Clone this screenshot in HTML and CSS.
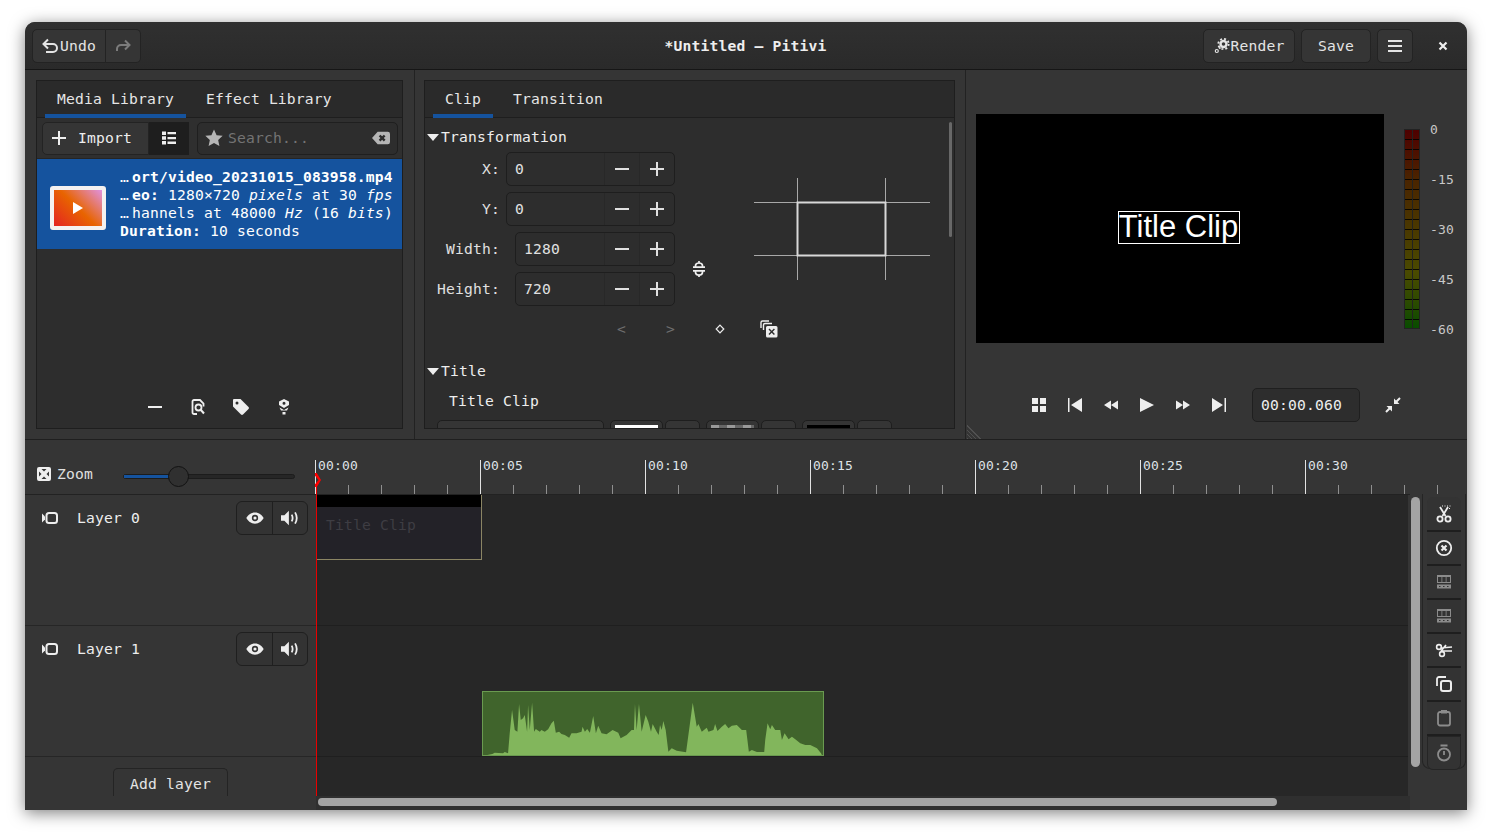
FILE: index.html
```html
<!DOCTYPE html>
<html lang="en">
<head>
  <meta charset="UTF-8">
  <title>Pitivi</title>
  <link rel="stylesheet" href="styles.css">
</head>
<body>
  <svg class="defs" width="0" height="0">
    <symbol id="i-plus" viewBox="0 0 16 16"><path d="M1 8h14M8 1v14" stroke="currentColor" stroke-width="2" fill="none"/></symbol>
    <symbol id="i-minus" viewBox="0 0 16 16"><path d="M1 8h14" stroke="currentColor" stroke-width="2" fill="none"/></symbol>
    <symbol id="i-eye" viewBox="0 0 16 16"><path fill="currentColor" fill-rule="evenodd" d="M8 3c3.600 0 6.400 2.400 7.700 5-1.300 2.600-4.100 5-7.700 5S1.600 10.600.3 8C1.600 5.400 4.400 3 8 3zm0 2.200a2.800 2.800 0 1 0 0 5.600 2.800 2.800 0 0 0 0-5.600zM8 6.600a1.400 1.400 0 1 1 0 2.800 1.400 1.400 0 0 1 0-2.800z"/></symbol>
    <symbol id="i-speaker" viewBox="0 0 16 16"><path fill="currentColor" d="M0 5.500h3L7 1.500v13l-4-4H0z"/><path d="M9.500 5c1 1.800 1 4.200 0 6M12.500 3c1.800 3 1.800 7 0 10" stroke="currentColor" stroke-width="1.600" fill="none"/></symbol>
    <symbol id="i-camera" viewBox="0 0 16 16"><path fill="currentColor" d="M0 3.500l3 3v3l-3 3z"/><rect x="4.500" y="3" width="10.500" height="10" rx="2.500" fill="none" stroke="currentColor" stroke-width="2"/></symbol>
  </svg>

  <div class="window">
    <header class="headerbar">
      <div class="hb-left">
        <div class="btn-group">
          <button class="btn btn-undo">
            <svg class="ic16" viewBox="0 0 16 16"><path d="M6 1.500L1.500 6 6 10.500M2 6h9a4 4 0 0 1 0 8H4" fill="none" stroke="currentColor" stroke-width="2"/></svg>Undo
          </button>
          <button class="btn btn-redo">
            <svg class="ic16" viewBox="0 0 16 16"><path d="M10 2.500L14.500 7 10 11.500M14 7H6a4 4 0 0 0-4 4v2" fill="none" stroke="currentColor" stroke-width="2"/></svg>
          </button>
        </div>
      </div>
      <div class="hb-title">*Untitled — Pitivi</div>
      <div class="hb-right">
        <button class="btn btn-render">
          <svg class="ic16" viewBox="0 0 16 16"><g fill="none" stroke="currentColor"><circle cx="9.500" cy="6" r="3" stroke-width="2.400"/><circle cx="9.500" cy="6" r="5.200" stroke-width="1.800" stroke-dasharray="2 2.080"/><circle cx="2.800" cy="13" r="1.500" stroke-width="1.200"/></g><circle cx="5.800" cy="10" r="1" fill="currentColor"/></svg>Render
        </button>
        <button class="btn btn-save">Save</button>
        <button class="btn btn-menu">
          <svg class="ic16" viewBox="0 0 16 16"><path d="M1 3h14M1 8h14M1 13h14" stroke="currentColor" stroke-width="2"/></svg>
        </button>
        <button class="btn-close">
          <svg class="ic10" viewBox="0 0 10 10"><path d="M1.500 1.500l7 7M8.500 1.500l-7 7" stroke="currentColor" stroke-width="2.200"/></svg>
        </button>
      </div>
    </header>

    <section class="top">
      <div class="pane pane-left">
        <div class="frame">
          <div class="tabs">
            <div class="tab active">Media Library</div>
            <div class="tab">Effect Library</div>
          </div>
          <div class="media-tools">
            <div class="import-group">
              <button class="import-btn">
                <svg class="ic16" viewBox="0 0 16 16"><use href="#i-plus"/></svg>Import
              </button>
              <button class="list-toggle">
                <svg class="ic16" viewBox="0 0 16 16"><path fill="currentColor" d="M1 1.500h4v3.500H1zM1 6.300h4v3.500H1zM1 11h4v3.500H1zM6.500 2h8.500v2.300H6.500zM6.500 7h8.500v2.300H6.500zM6.500 11.600h8.500v2.300H6.500z"/></svg>
              </button>
            </div>
            <div class="search">
              <svg class="ic18 dim" viewBox="0 0 16 16"><path fill="currentColor" d="M8 .5l2.300 5 5.400.6-4 3.700 1.100 5.400L8 12.500l-4.800 2.700 1.100-5.400-4-3.700 5.400-.6z"/></svg>
              <span class="search-text">Search...</span>
              <svg class="ic18 dim" viewBox="0 0 16 16"><path fill-rule="evenodd" fill="currentColor" d="M5 2.500h9a2 2 0 0 1 2 2v7a2 2 0 0 1-2 2H5L0 8zM7.500 5L6 6.500 7.500 8 6 9.500 7.500 11 9 9.500l1.500 1.500 1.500-1.500L10.500 8 12 6.500 10.500 5 9 6.500z"/></svg>
            </div>
          </div>
          <div class="media-row">
            <div class="thumb"><span class="thumb-play"></span></div>
            <div class="media-info">
              <div><span class="ell">…</span><b>ort/video_20231015_083958.mp4</b></div>
              <div><span class="ell">…</span><b>eo:</b> 1280×720 <i>pixels</i> at 30 <i>fps</i></div>
              <div><span class="ell">…</span>hannels at 48000 <i>Hz</i> (16 <i>bits</i>)</div>
              <div><b>Duration:</b> 10 seconds</div>
            </div>
          </div>
          <div class="media-actions">
            <svg class="ic16" viewBox="0 0 16 16"><use href="#i-minus"/></svg>
            <svg class="ic16" viewBox="0 0 16 16"><path fill="none" stroke="currentColor" stroke-width="1.800" d="M7 15H4a1.500 1.500 0 0 1-1.500-1.500v-11A1.500 1.500 0 0 1 4 1h6l3.500 3.500v3"/><circle cx="8.500" cy="8.500" r="3" fill="none" stroke="currentColor" stroke-width="1.800"/><path d="M10.500 10.500l3.500 4" stroke="currentColor" stroke-width="2"/></svg>
            <svg class="ic16" viewBox="0 0 16 16"><path fill="currentColor" fill-rule="evenodd" d="M1 0h6.500L15.500 8a1.500 1.500 0 0 1 0 2L10 15.500a1.500 1.500 0 0 1-2 0L0 7.500V1a1 1 0 0 1 1-1zM4 2.500a1.500 1.500 0 1 0 0 3 1.500 1.500 0 0 0 0-3z"/></svg>
            <svg class="ic16" viewBox="0 0 16 16"><path fill="currentColor" fill-rule="evenodd" d="M8 0l5 2.500v3.500L8 9 3 6V2.500zM8 2.800a1.500 1.500 0 1 0 0 3 1.500 1.500 0 0 0 0-3zM3.500 8.500L8 11l4.500-2.500-1.500 3H5zM6.500 13h3v2.500h-3z"/></svg>
          </div>
        </div>
      </div>

      <div class="pane pane-mid">
        <div class="frame">
          <div class="tabs">
            <div class="tab active">Clip</div>
            <div class="tab">Transition</div>
          </div>
          <div class="clip-body">
            <div class="scroll-mark"></div>
            <div class="expander"><span class="arrow"></span>Transformation</div>
            <div class="transform">
              <div class="spins">
                <div class="spin-row">
                  <label>X:</label>
                  <div class="spin"><span class="spin-val">0</span><button><svg class="ic16" viewBox="0 0 16 16"><use href="#i-minus"/></svg></button><button><svg class="ic16" viewBox="0 0 16 16"><use href="#i-plus"/></svg></button></div>
                </div>
                <div class="spin-row">
                  <label>Y:</label>
                  <div class="spin"><span class="spin-val">0</span><button><svg class="ic16" viewBox="0 0 16 16"><use href="#i-minus"/></svg></button><button><svg class="ic16" viewBox="0 0 16 16"><use href="#i-plus"/></svg></button></div>
                </div>
                <div class="spin-row narrow">
                  <label>Width:</label>
                  <div class="spin"><span class="spin-val">1280</span><button><svg class="ic16" viewBox="0 0 16 16"><use href="#i-minus"/></svg></button><button><svg class="ic16" viewBox="0 0 16 16"><use href="#i-plus"/></svg></button></div>
                </div>
                <div class="spin-row narrow">
                  <label>Height:</label>
                  <div class="spin"><span class="spin-val">720</span><button><svg class="ic16" viewBox="0 0 16 16"><use href="#i-minus"/></svg></button><button><svg class="ic16" viewBox="0 0 16 16"><use href="#i-plus"/></svg></button></div>
                </div>
              </div>
              <svg class="link-ic" viewBox="0 0 12 16"><path d="M0 6.200h12M2.500 6V4.800a3.500 2.800 0 0 1 7 0V6M6 0v2M0 9.800h12M2.500 10v1.200a3.500 2.800 0 0 0 7 0V10M6 14v2" fill="none" stroke="currentColor" stroke-width="1.700"/></svg>
              <svg class="crop-diagram" viewBox="0 0 176 102">
                <path d="M0 24.500h176M0 77.500h176M43.500 0v102M131.500 0v102" stroke="#a8a8a8" fill="none"/>
                <rect x="43.500" y="24.500" width="88" height="53" fill="none" stroke="#d8d8d8" stroke-width="2"/>
              </svg>
            </div>
            <div class="key-row">
              <span class="key-btn dimmer">&lt;</span>
              <span class="key-btn dimmer">&gt;</span>
              <span class="key-btn"><svg class="ic10" viewBox="0 0 10 10"><path d="M5 1.200L8.800 5 5 8.800 1.200 5z" fill="none" stroke="currentColor" stroke-width="1.200"/></svg></span>
              <span class="key-btn"><svg class="ic18" viewBox="0 0 18 18"><path d="M1 8V2.500A1.500 1.500 0 0 1 2.500 1H9M3.500 10V5A1.500 1.500 0 0 1 5 3.500h7" fill="none" stroke="currentColor" stroke-width="1.400"/><path fill="currentColor" fill-rule="evenodd" d="M7.500 6h8.500A1.500 1.500 0 0 1 17.500 7.500v8.500a1.500 1.500 0 0 1-1.500 1.500H7.500A1.500 1.500 0 0 1 6 16V7.500A1.500 1.500 0 0 1 7.500 6zM9.500 8.500L8.500 9.500l2.200 2.200-2.200 2.200 1 1 2.200-2.200 2.200 2.200 1-1-2.200-2.200 2.200-2.200-1-1-2.200 2.200z"/></svg></span>
            </div>
            <div class="expander title-exp"><span class="arrow"></span>Title</div>
            <div class="title-line">Title Clip</div>
            <div class="title-controls">
              <div class="font-box"></div>
              <div class="color-pair"><div class="color-btn"><span class="swatch white"></span></div><div class="color-arrow"></div></div>
              <div class="color-pair"><div class="color-btn"><span class="swatch check"></span></div><div class="color-arrow"></div></div>
              <div class="color-pair"><div class="color-btn"><span class="swatch black"></span></div><div class="color-arrow"></div></div>
            </div>
          </div>
        </div>
      </div>

      <div class="pane pane-right">
        <div class="viewer-row">
          <div class="viewer"><div class="viewer-title">Title Clip</div></div>
          <div class="vu"></div>
          <div class="vu-labels"><span>0</span><span>-15</span><span>-30</span><span>-45</span><span>-60</span></div>
        </div>
        <div class="transport">
          <button><svg class="ic14" viewBox="0 0 14 14"><path fill="currentColor" d="M0 0h6v6H0zM8 0h6v6H8zM0 8h6v6H0zM8 8h6v6H8z"/></svg></button>
          <button><svg class="ic14" viewBox="0 0 14 14"><path fill="currentColor" d="M0 0h1.500v14H0zM14 0v14L3 7z"/></svg></button>
          <button><svg class="ic14" viewBox="0 0 14 14"><path fill="currentColor" d="M7 2.500v9L0 7zM14 2.500v9L7 7z"/></svg></button>
          <button><svg class="ic14" viewBox="0 0 14 14"><path fill="currentColor" d="M0 0l14 7-14 7z"/></svg></button>
          <button><svg class="ic14" viewBox="0 0 14 14"><path fill="currentColor" d="M0 2.500L7 7l-7 4.500zM7 2.500L14 7l-7 4.500z"/></svg></button>
          <button><svg class="ic14" viewBox="0 0 14 14"><path fill="currentColor" d="M0 0l11 7-11 7zM12.500 0H14v14h-1.500z"/></svg></button>
          <div class="timecode">00:00.060</div>
          <button><svg class="ic16" viewBox="0 0 16 16"><path fill="currentColor" d="M9 1.500V7h5.500zM7 14.500V9H1.500z"/><path d="M10.500 5.500l4.500-4.500M5.500 10.500L1 15" stroke="currentColor" stroke-width="2"/></svg></button>
        </div>
        <div class="grip"></div>
      </div>
    </section>

    <section class="timeline">
      <div class="tl-main">
        <div class="tl-top">
          <div class="zoom-box">
            <svg class="ic14" viewBox="0 0 14 14"><path fill="currentColor" fill-rule="evenodd" d="M2 0h10a2 2 0 0 1 2 2v10a2 2 0 0 1-2 2H2a2 2 0 0 1-2-2V2a2 2 0 0 1 2-2zM4.500 2L7 4.500 9.500 2zM4.500 12L7 9.500 9.500 12zM2 4.500L4.500 7 2 9.500zM12 4.500L9.500 7 12 9.500z"/></svg>
            <span class="zoom-label">Zoom</span>
            <div class="slider"><span class="slider-fill"></span><span class="slider-knob"></span></div>
          </div>
          <div class="ruler">
            <span>00:00</span><span>00:05</span><span>00:10</span><span>00:15</span><span>00:20</span><span>00:25</span><span>00:30</span>
          </div>
        </div>
        <div class="tl-body">
          <div class="heads">
            <div class="layer-head">
              <svg class="ic16" viewBox="0 0 16 16"><use href="#i-camera"/></svg>
              <span class="layer-name">Layer 0</span>
              <div class="layer-btns">
                <button><svg class="ic18" viewBox="0 0 16 16"><use href="#i-eye"/></svg></button>
                <button><svg class="ic18" viewBox="0 0 16 16"><use href="#i-speaker"/></svg></button>
              </div>
            </div>
            <div class="layer-head">
              <svg class="ic16" viewBox="0 0 16 16"><use href="#i-camera"/></svg>
              <span class="layer-name">Layer 1</span>
              <div class="layer-btns">
                <button><svg class="ic18" viewBox="0 0 16 16"><use href="#i-eye"/></svg></button>
                <button><svg class="ic18" viewBox="0 0 16 16"><use href="#i-speaker"/></svg></button>
              </div>
            </div>
            <div class="add-wrap"><button class="add-layer">Add layer</button></div>
          </div>
          <div class="tracks">
            <div class="track">
              <div class="clip-title"><div class="clip-title-bar"></div><div class="clip-title-text">Title Clip</div></div>
            </div>
            <div class="track">
              <svg class="clip-audio" viewBox="37 33 1024 195" preserveAspectRatio="none">
                <rect x="37" y="33" width="1024" height="195" fill="#40642c"/>
                <polygon fill="#82b65c" points="38,228 68,222 75,218 100,220 105,216 115,220 120,160 127,90 135,150 143,155 148,72 153,120 160,115 165,105 172,155 175,75 180,150 187,68 193,155 198,147 210,155 215,150 225,155 235,148 245,130 252,122 258,158 268,155 275,162 285,165 298,173 305,160 320,160 335,155 338,140 345,155 352,147 360,158 370,108 378,160 385,137 395,160 410,163 428,150 445,158 452,175 470,165 485,150 492,150 495,72 500,150 507,72 515,155 527,105 535,125 543,155 548,132 560,155 566,165 570,135 575,150 580,123 587,150 595,215 605,205 620,212 648,217 668,68 680,140 685,132 695,155 710,143 715,155 730,150 735,132 742,153 755,140 765,132 775,145 785,137 800,135 815,150 828,150 836,215 845,210 860,216 882,216 885,180 892,130 900,148 905,135 915,150 930,150 935,180 943,160 955,178 965,170 975,178 990,190 1005,195 1020,195 1040,205 1052,220 1056,228"/>
                <rect x="38.500" y="34.500" width="1021" height="192" fill="none" stroke="#6a9a50" stroke-width="3"/>
              </svg>
            </div>
            <div class="track-rest"></div>
          </div>
        </div>
        <div class="hscroll"><div class="hscroll-thumb"></div></div>
        <div class="playhead"><span class="playhead-mark"></span></div>
      </div>
      <div class="tl-side">
        <div class="vscroll"></div>
        <div class="tool-frame">
          <button class="tool"><svg class="ic18" viewBox="0 0 18 18"><path d="M7 1h1M9.500 1h1M12 1h1M14.500 1h1M14.500 3v1" stroke="currentColor"/><path d="M5 2l5.500 9M13 2L7.500 11" stroke="currentColor" stroke-width="1.800" fill="none"/><circle cx="5" cy="14" r="2.600" fill="none" stroke="currentColor" stroke-width="1.800"/><circle cx="13" cy="14" r="2.600" fill="none" stroke="currentColor" stroke-width="1.800"/></svg></button>
          <button class="tool"><svg class="ic18" viewBox="0 0 18 18"><circle cx="9" cy="9" r="7.200" fill="none" stroke="currentColor" stroke-width="1.800"/><path d="M6.500 6.500l5 5M11.500 6.500l-5 5" stroke="currentColor" stroke-width="2.200"/></svg></button>
          <button class="tool faded"><svg class="ic16" viewBox="0 0 16 16"><path fill="currentColor" fill-rule="evenodd" d="M1 1h14v8H1zM2 3v5h3.500V3zM6.300 3v5h3.400V3zM10.500 3v5H14V3zM1 10.500h14v4H1zM3 12v1h1.500v-1zM7 12v1h1.500v-1zM11 12v1h1.500v-1z"/></svg></button>
          <button class="tool faded"><svg class="ic16" viewBox="0 0 16 16"><path fill="currentColor" fill-rule="evenodd" d="M1 1h14v8H1zM2 3v5h3.500V3zM6.300 3v5h3.400V3zM10.500 3v5H14V3zM1 10.500h14v4H1zM3 12v1h1.500v-1zM7 12v1h1.500v-1zM11 12v1h1.500v-1z"/></svg></button>
          <button class="tool"><svg class="ic18" viewBox="0 0 18 18"><path d="M5.500 7L17 6M6 10l5-6M6.500 10L17 10" stroke="currentColor" stroke-width="1.700" fill="none"/><circle cx="4" cy="6" r="2.400" fill="none" stroke="currentColor" stroke-width="1.600"/><circle cx="7" cy="13" r="2.400" fill="none" stroke="currentColor" stroke-width="1.600"/></svg></button>
          <button class="tool"><svg class="ic18" viewBox="0 0 18 18"><path d="M2 11V4a2 2 0 0 1 2-2h7" fill="none" stroke="currentColor" stroke-width="1.800"/><rect x="6" y="6" width="10" height="10" rx="2" fill="none" stroke="currentColor" stroke-width="2"/></svg></button>
          <button class="tool faded"><svg class="ic18" viewBox="0 0 18 18"><rect x="3" y="3" width="12" height="13.500" rx="2" fill="none" stroke="currentColor" stroke-width="1.800"/><path fill="currentColor" d="M6 1h6v3.500H6z"/></svg></button>
          <button class="tool faded"><svg class="ic18" viewBox="0 0 18 18"><circle cx="9" cy="10.500" r="6" fill="none" stroke="currentColor" stroke-width="1.800"/><path d="M5.500 1.500h7M9 7v4" stroke="currentColor" stroke-width="1.800"/></svg></button>
        </div>
      </div>
    </section>
  </div>
</body>
</html>
```

FILE: styles.css
```css
* {
  box-sizing: border-box;
}
html, body {
  margin: 0;
  height: 100%;
  background: #fff;
  overflow: hidden;
}
body {
  padding: 22px 25px 0;
  font: 14.67px/20px "DejaVu Sans Mono", monospace;
  letter-spacing: .17px;
  color: #eee;
}
button {
  font: inherit;
  letter-spacing: inherit;
  color: inherit;
  background: none;
  border: 0;
  padding: 0;
}
svg {
  display: block;
  flex: none;
}
.defs {
  position: absolute;
}
.ic10 { width: 10px; height: 10px; }
.ic14 { width: 14px; height: 14px; }
.ic16 { width: 16px; height: 16px; }
.ic18 { width: 18px; height: 18px; }
.dim { color: #b5b5b5; }

.window {
  width: 1442px;
  height: 788px;
  display: flex;
  flex-direction: column;
  background: #353535;
  border-radius: 10px 10px 0 0;
  box-shadow: 0 3px 16px rgba(0,0,0,.5);
  overflow: hidden;
}

/* header */
.headerbar {
  height: 48px;
  flex: none;
  display: grid;
  grid-template-columns: 1fr auto 1fr;
  align-items: center;
  padding: 0 8px 0 7px;
  background: linear-gradient(#303030, #2a2a2a);
  border-bottom: 1px solid #161616;
}
.hb-title {
  font-weight: bold;
  color: #eee;
}
.hb-right {
  display: flex;
  justify-content: flex-end;
  align-items: center;
  gap: 6px;
}
.btn-group {
  display: inline-flex;
}
.btn {
  height: 34px;
  display: flex;
  align-items: center;
  justify-content: center;
  background: #353535;
  border: 1px solid #232323;
  border-radius: 5px;
  color: #e4e4e4;
}
.btn-undo {
  width: 74px;
  gap: 2px;
  border-radius: 5px 0 0 5px;
}
.btn-redo {
  width: 35px;
  border-left: 0;
  border-radius: 0 5px 5px 0;
  color: #7c7c7c;
}
.btn-render { width: 92px; gap: 1px; }
.btn-save { width: 70px; }
.btn-menu { width: 36px; }
.btn-close {
  width: 30px;
  margin-left: 9px;
  margin-right: 1px;
  display: flex;
  justify-content: center;
}

/* top panes */
.top {
  height: 370px;
  flex: none;
  display: flex;
  border-bottom: 1px solid #1f1f1f;
}
.pane {
  position: relative;
  display: flex;
  flex-direction: column;
  border-right: 1px solid #222;
}
.pane-left {
  width: 390px;
  padding: 10px 11px 10px 11px;
}
.pane-mid {
  width: 551px;
  padding: 10px 10px 10px 9px;
}
.pane-right {
  flex: 1;
  border-right: 0;
}
.frame {
  flex: 1;
  min-height: 0;
  display: flex;
  flex-direction: column;
  border: 1px solid #1e1e1e;
  background: #2d2d2d;
  overflow: hidden;
}
.tabs {
  height: 37px;
  flex: none;
  display: flex;
  gap: 8px;
  padding-left: 8px;
  background: #2a2a2a;
  border-bottom: 1px solid #1e1e1e;
}
.tab {
  padding: 8px 12px 0;
  color: #e6e6e6;
  height: 37px;
}
.tab.active {
  border-bottom: 4px solid #15539e;
}

/* media library */
.media-tools {
  height: 41px;
  flex: none;
  display: flex;
  align-items: center;
  gap: 8px;
  padding: 0 0 0 5px;
  background: #2f2f2f;
  border-bottom: 1px solid #252525;
}
.import-group {
  display: flex;
  height: 33px;
}
.import-btn {
  width: 107px;
  display: flex;
  align-items: center;
  gap: 11px;
  padding-left: 8px;
  background: #353535;
  border: 1px solid #232323;
  border-radius: 5px 0 0 5px;
}
.list-toggle {
  width: 40px;
  display: flex;
  align-items: center;
  justify-content: center;
  background: #1e1e1e;
}
.search {
  width: 201px;
  height: 33px;
  display: flex;
  align-items: center;
  padding: 0 7px;
  gap: 5px;
  background: #2d2d2d;
  border: 1px solid #1f1f1f;
  border-radius: 5px;
}
.search-text {
  flex: 1;
  color: #747474;
}
.media-row {
  height: 90px;
  flex: none;
  display: flex;
  align-items: center;
  gap: 14px;
  padding-left: 13px;
  background: #15539e;
  color: #fff;
  line-height: 18px;
}
.thumb {
  width: 56px;
  height: 44px;
  margin-top: 8px;
  display: flex;
  align-items: center;
  justify-content: center;
  border: 4px solid #f4f1f0;
  border-radius: 3px;
  background: linear-gradient(45deg, #e42322 0%, #e86400 50%, #e092e0 100%);
}
.thumb-play {
  width: 0;
  height: 0;
  border-left: 10px solid #fff;
  border-top: 6px solid transparent;
  border-bottom: 6px solid transparent;
}
.media-info {
  white-space: nowrap;
}
.ell {
  display: inline-block;
  width: 12px;
}
.media-actions {
  margin-top: auto;
  height: 42px;
  display: flex;
  align-items: center;
  justify-content: center;
  gap: 27px;
  color: #eee;
}

/* clip panel */
.clip-body {
  position: relative;
  flex: 1;
  min-height: 0;
  padding: 9px 0 0 3px;
  overflow: hidden;
}
.scroll-mark {
  position: absolute;
  top: 4px;
  right: 2px;
  width: 3px;
  height: 115px;
  border-radius: 2px;
  background: #686868;
}
.expander {
  display: flex;
  align-items: center;
  gap: 3px;
}
.arrow {
  width: 0;
  height: 0;
  border-left: 6px solid transparent;
  border-right: 6px solid transparent;
  border-top: 7px solid #eee;
  margin-left: -1px;
  margin-right: -1px;
}
.transform {
  display: flex;
  margin-top: 5px;
  margin-left: -3px;
}
.spins {
  width: 250px;
  display: flex;
  flex-direction: column;
  gap: 6px;
}
.spin-row {
  display: flex;
  align-items: center;
  justify-content: flex-end;
  gap: 6px;
  color: #e0e0e0;
}
.spin {
  width: 169px;
  height: 34px;
  display: flex;
  border: 1px solid #1e1e1e;
  border-radius: 5px;
  background: #2d2d2d;
}
.spin-row.narrow .spin {
  width: 160px;
}
.spin-row.narrow label {
  margin-right: 9px;
}
.spin-val {
  flex: 1;
  padding: 6px 0 0 8px;
}
.spin button {
  width: 35px;
  display: flex;
  align-items: center;
  justify-content: center;
  border-left: 1px solid #282828;
}
.link-ic {
  width: 12px;
  height: 16px;
  align-self: flex-end;
  margin: 0 0 29px 18px;
  color: #eee;
}
.crop-diagram {
  width: 176px;
  height: 102px;
  margin: 26px 0 0 49px;
}
.key-row {
  display: flex;
  align-items: center;
  height: 24px;
  margin-top: 11px;
  padding-left: 169px;
}
.key-btn {
  width: 49px;
  display: flex;
  justify-content: center;
  color: #eee;
}
.key-btn.dimmer {
  color: #6e6e6e;
}
.title-exp {
  margin-top: 20px;
}
.title-line {
  margin-top: 10px;
  padding-left: 21px;
}
.title-controls {
  display: flex;
  gap: 6px;
  margin-top: 9px;
  padding-left: 9px;
}
.font-box, .color-btn, .color-arrow {
  height: 30px;
  border: 1px solid #1e1e1e;
  border-radius: 5px;
  background: #353535;
}
.font-box {
  width: 167px;
}
.color-pair {
  display: flex;
  gap: 2px;
}
.color-btn {
  width: 53px;
  padding: 4px 4px 0;
}
.color-arrow {
  width: 35px;
}
.swatch {
  display: block;
  height: 5px;
}
.swatch.white { background: #fff; }
.swatch.black { background: #000; }
.swatch.check { background: repeating-linear-gradient(90deg, #999 0 8px, #666 8px 16px); }

/* viewer */
.viewer-row {
  display: flex;
  padding: 44px 0 0 10px;
}
.viewer {
  width: 408px;
  height: 229px;
  display: flex;
  align-items: center;
  justify-content: center;
  background: #000;
}
.viewer-title {
  height: 33px;
  width: 122px;
  margin: -2px 0 0 -3px;
  border: 1px solid #fff;
  font: 31px/30px "Liberation Sans", sans-serif;
  letter-spacing: 0;
  color: #fff;
  text-align: center;
  white-space: nowrap;
}
.vu {
  width: 16px;
  height: 200px;
  margin: 15px 0 0 20px;
  border: 1px solid #222;
  background:
    linear-gradient(90deg, transparent 7px, #222 7px 8px, transparent 8px),
    repeating-linear-gradient(180deg, transparent 0 9px, rgba(0,0,0,.85) 9px 10px),
    linear-gradient(180deg, #4f0000 0%, #4a2400 25%, #4a3800 50%, #4a4a00 72%, #2e4a00 86%, #084c00 100%);
}
.vu-labels {
  height: 220px;
  margin: 6px 0 0 10px;
  display: flex;
  flex-direction: column;
  justify-content: space-between;
  font-size: 13px;
  color: #c8c8c8;
}
.transport {
  display: flex;
  align-items: center;
  height: 34px;
  margin-top: 45px;
  padding-left: 55px;
}
.transport button {
  width: 36px;
  display: flex;
  justify-content: center;
}
.timecode {
  width: 108px;
  height: 34px;
  margin: 0 15px;
  padding: 6px 0 0 8px;
  border: 1px solid #1f1f1f;
  border-radius: 5px;
  background: #2d2d2d;
}
.grip {
  position: absolute;
  left: 1px;
  bottom: 0;
  width: 16px;
  height: 16px;
  background: repeating-linear-gradient(45deg, #505050 0 1px, transparent 1px 3px);
  clip-path: polygon(0 0, 100% 100%, 0 100%);
}

/* timeline */
.timeline {
  flex: 1;
  min-height: 0;
  display: flex;
}
.tl-main {
  position: relative;
  width: 1385px;
  display: flex;
  flex-direction: column;
}
.tl-top {
  height: 55px;
  flex: none;
  display: flex;
  border-bottom: 1px solid #222;
}
.zoom-box {
  width: 290px;
  flex: none;
  display: flex;
  align-items: center;
  padding: 14px 0 0 12px;
}
.zoom-label {
  margin-left: 6px;
  color: #e0e0e0;
}
.slider {
  position: relative;
  width: 172px;
  height: 5px;
  margin: 4px 0 0 30px;
  background: #262626;
  border: 1px solid #1c1c1c;
  border-radius: 3px;
}
.slider-fill {
  display: block;
  width: 45px;
  height: 3px;
  background: #15539e;
}
.slider-knob {
  position: absolute;
  left: 44px;
  top: -9px;
  width: 21px;
  height: 21px;
  border-radius: 50%;
  background: #303030;
  border: 1px solid #121212;
}
.ruler {
  flex: 1;
  display: flex;
  padding-top: 19px;
  font-size: 13px;
  line-height: 14px;
  color: #dfe3e8;
  background:
    repeating-linear-gradient(90deg, #e2e2e2 0 1px, transparent 1px 165px) left bottom / 100% 34px no-repeat,
    repeating-linear-gradient(90deg, #8f8f8f 0 1px, transparent 1px 33px) left bottom / 100% 9px no-repeat;
}
.ruler span {
  width: 165px;
  flex: none;
  padding-left: 3px;
}
.tl-body {
  height: 301px;
  flex: none;
  display: flex;
}
.heads {
  width: 291px;
  flex: none;
  display: flex;
  flex-direction: column;
}
.layer-head {
  height: 131px;
  display: flex;
  align-items: flex-start;
  padding: 6px 8px 0 17px;
  border-bottom: 1px solid #262626;
}
.layer-head > svg {
  margin-top: 9px;
}
.layer-name {
  margin: 7px auto 0 19px;
}
.layer-btns {
  display: flex;
  height: 34px;
  border: 1px solid #1f1f1f;
  border-radius: 6px;
  background: #333;
}
.layer-btns button {
  width: 35px;
  display: flex;
  align-items: center;
  justify-content: center;
}
.layer-btns button + button {
  border-left: 1px solid #1f1f1f;
}
.add-wrap {
  flex: 1;
  display: flex;
  align-items: flex-end;
  justify-content: center;
  overflow: hidden;
}
.add-layer {
  width: 115px;
  height: 28px;
  padding-top: 3px;
  border: 1px solid #242424;
  border-bottom: 0;
  border-radius: 5px 5px 0 0;
  color: #e4e4e4;
}
.tracks {
  width: 1092px;
  flex: none;
  display: flex;
  flex-direction: column;
  background: #272727;
}
.track {
  position: relative;
  height: 131px;
  border-bottom: 1px solid #1f1f1f;
}
.track-rest {
  flex: 1;
}
.clip-title {
  width: 166px;
  height: 65px;
  background: #232228;
  border-right: 1px solid #8b8564;
  border-bottom: 1px solid #8b8564;
}
.clip-title-bar {
  height: 12px;
  background: #000;
}
.clip-title-text {
  padding: 8px 0 0 10px;
  color: #3e3d43;
}
.clip-audio {
  position: absolute;
  left: 166px;
  bottom: 0;
  width: 342px;
  height: 65px;
}
.hscroll {
  height: 14px;
  margin-left: 291px;
  background: #2f2f2f;
  padding: 2px 0 0 2px;
}
.hscroll-thumb {
  width: 959px;
  height: 8px;
  border-radius: 4px;
  background: #a4a4a4;
}
.playhead {
  position: absolute;
  left: 291px;
  top: 46px;
  width: 1px;
  height: 310px;
  background: #e80000;
}
.playhead-mark {
  position: absolute;
  left: -1px;
  top: -13px;
  width: 6px;
  height: 14px;
  clip-path: polygon(0 0, 30% 0, 100% 50%, 30% 100%, 0 100%, 0 80%, 60% 50%, 0 20%);
  background: #ff0000;
}
.tl-side {
  flex: 1;
  display: flex;
  padding-top: 57px;
}
.vscroll {
  width: 9px;
  height: 270px;
  margin-left: 1px;
  border-radius: 5px;
  background: #a4a4a4;
}
.tool-frame {
  width: 44px;
  height: 275px;
  margin: -3px 0 0 2px;
  padding: 3px 4px 4px;
  border: 1px solid #252525;
  border-top: 0;
  border-radius: 0 0 8px 8px;
  display: flex;
  flex-direction: column;
}
.tool {
  height: 34px;
  flex: none;
  display: flex;
  align-items: center;
  justify-content: center;
  background: #333;
  border-bottom: 2px solid #1e1e1e;
  color: #eee;
}
.tool:first-child {
  border-radius: 6px 6px 0 0;
  height: 35px;
  padding-top: 1px;
}
.tool:last-child {
  border: 1px solid #252525;
  border-radius: 0 0 6px 6px;
}
.tool.faded {
  color: #8c8c8c;
}
```
